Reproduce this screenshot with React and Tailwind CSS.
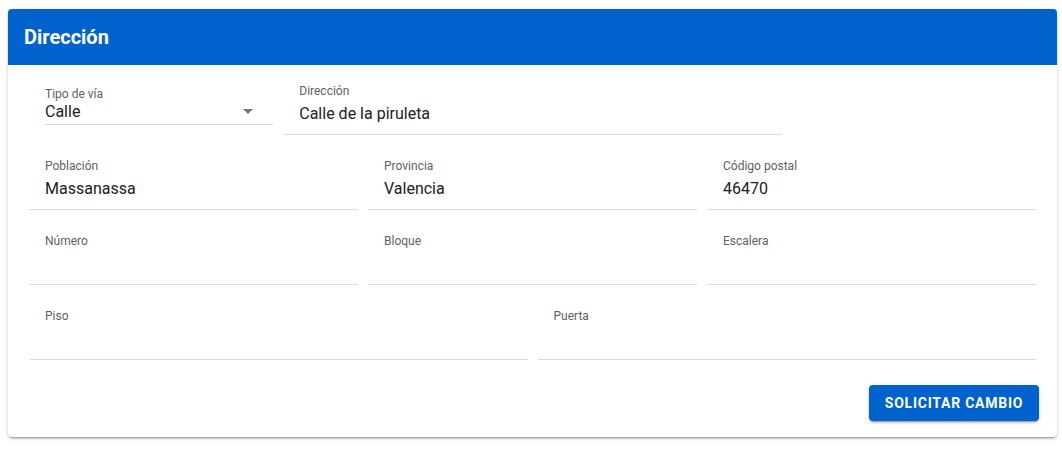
const Field = ({ label, value, className = "" }) => (
  <div className={`h-[60px] border-b border-[#dcdcdc] pl-4 pt-[9px] ${className}`}>
    <div className="text-xs leading-[14px] text-[#616161]">{label}</div>
    <div className="mt-[4px] text-base leading-6 text-[#212121]">{value}</div>
  </div>
);

const SelectField = ({ label, value, className = "" }) => (
  <div className={`pl-4 ${className}`}>
    <div className="relative h-[50px] border-b border-[#d6d6d6] pt-[12px]">
      <div className="text-xs leading-[14px] text-[#616161]">{label}</div>
      <div className="text-base leading-[22px] text-[#212121]">{value}</div>
      <svg className="absolute right-[13px] top-[24px] h-6 w-6" viewBox="0 0 24 24" fill="#757575">
        <path d="M7 10l5 5 5-5z" />
      </svg>
    </div>
  </div>
);

export default function App() {
  return (
    <div className="min-h-screen bg-white pt-[9px] font-['Roboto',sans-serif]">
      <div className="ml-2 w-[1049px] overflow-hidden rounded bg-white shadow-[0_3px_1px_-2px_rgba(0,0,0,0.2),0_2px_2px_0_rgba(0,0,0,0.14),0_1px_5px_0_rgba(0,0,0,0.12)]">
        <div className="flex h-14 items-center bg-[#0062cc] pl-4">
          <h1 className="text-xl font-bold text-white">Dirección</h1>
        </div>

        <div className="px-[21px] pt-[10px]">
          <div className="grid grid-cols-12 gap-x-[10px] gap-y-[15px]">
            <SelectField className="col-span-3" label="Tipo de vía" value="Calle" />
            <Field className="col-span-6" label="Dirección" value="Calle de la piruleta" />
            <div className="col-span-3" />

            <Field className="col-span-4" label="Población" value="Massanassa" />
            <Field className="col-span-4" label="Provincia" value="Valencia" />
            <Field className="col-span-4" label="Código postal" value="46470" />

            <Field className="col-span-4" label="Número" value="" />
            <Field className="col-span-4" label="Bloque" value="" />
            <Field className="col-span-4" label="Escalera" value="" />

            <Field className="col-span-6" label="Piso" value="" />
            <Field className="col-span-6" label="Puerta" value="" />
          </div>
        </div>

        <div className="flex justify-end pb-4 pr-[18px] pt-[25px]">
          <button className="h-9 w-[170px] rounded bg-[#0062cc] text-sm font-bold uppercase tracking-[0.75px] text-white shadow-[0_3px_1px_-2px_rgba(0,0,0,0.2),0_2px_2px_0_rgba(0,0,0,0.14),0_1px_5px_0_rgba(0,0,0,0.12)]">
            Solicitar cambio
          </button>
        </div>
      </div>
    </div>
  );
}
